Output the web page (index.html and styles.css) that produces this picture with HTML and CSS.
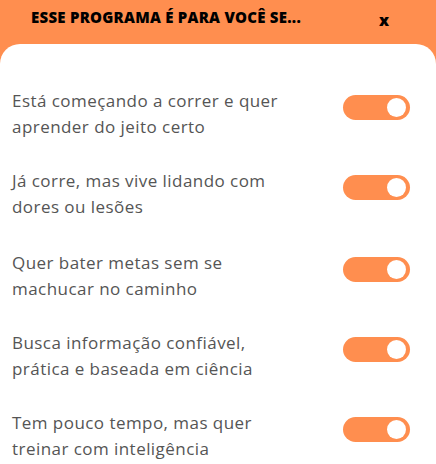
FILE: index.html
```html
<!DOCTYPE html>
<html lang="pt-BR">
<head>
<meta charset="utf-8">
<link rel="stylesheet" href="styles.css">
</head>
<body>
<div class="modal">
  <div class="modal-header">
    <h2 class="modal-title">ESSE PROGRAMA É PARA VOCÊ SE...</h2>
    <button class="close">x</button>
  </div>
  <div class="card">
    <div class="item">
      <p class="item-text">Está começando a correr e quer aprender do jeito certo</p>
      <span class="toggle"><span class="knob"></span></span>
    </div>
    <div class="item">
      <p class="item-text">Já corre, mas vive lidando com dores ou lesões</p>
      <span class="toggle"><span class="knob"></span></span>
    </div>
    <div class="item item-wide">
      <p class="item-text">Quer bater metas sem se machucar no caminho</p>
      <span class="toggle"><span class="knob"></span></span>
    </div>
    <div class="item">
      <p class="item-text">Busca informação confiável, prática e baseada em ciência</p>
      <span class="toggle"><span class="knob"></span></span>
    </div>
    <div class="item">
      <p class="item-text">Tem pouco tempo, mas quer treinar com inteligência</p>
      <span class="toggle"><span class="knob"></span></span>
    </div>
  </div>
</div>
</body>
</html>
```
FILE: styles.css
```css
* { box-sizing: border-box; }
html, body { margin: 0; padding: 0; }
body {
  background: #111;
  font-family: "Open Sans", "Liberation Sans", sans-serif;
  width: 436px;
  height: 464px;
  overflow: hidden;
}
.modal {
  background: #ff8e4f;
  border-radius: 0 0 20px 20px;
  overflow: hidden;
  width: 436px;
}
.modal-header {
  height: 44px;
  display: flex;
  align-items: flex-start;
  padding: 0 0 0 31px;
}
.modal-title {
  margin: 0;
  padding-top: 5px;
  font-size: 15px;
  line-height: 24px;
  font-weight: 800;
  color: #000;
  letter-spacing: 0.25px;
  flex: 1;
}
.close {
  background: none;
  border: 0;
  padding: 0;
  margin: 8px 47px 0 0;
  font-family: "Open Sans", sans-serif;
  font-size: 16px;
  font-weight: 800;
  line-height: 24px;
  color: #000;
}
.card {
  background: #fff;
  border-radius: 20px;
  padding: 44px 26px 24px 12px;
  display: flex;
  flex-direction: column;
  gap: 28px;
}
.item {
  display: flex;
  align-items: flex-start;
  justify-content: space-between;
}
.item-wide { margin-top: 2px; }
.item-text {
  margin: 0;
  width: 292px;
  font-size: 17px;
  line-height: 26px;
  letter-spacing: 0.45px;
  color: #555;
}
.toggle {
  flex: none;
  margin-top: 7px;
  width: 67px;
  height: 25px;
  border-radius: 13px;
  background: #ff8e4f;
  display: flex;
  align-items: center;
  justify-content: flex-end;
  padding-right: 4px;
}
.knob {
  width: 19px;
  height: 19px;
  border-radius: 50%;
  background: #fff;
}
```
